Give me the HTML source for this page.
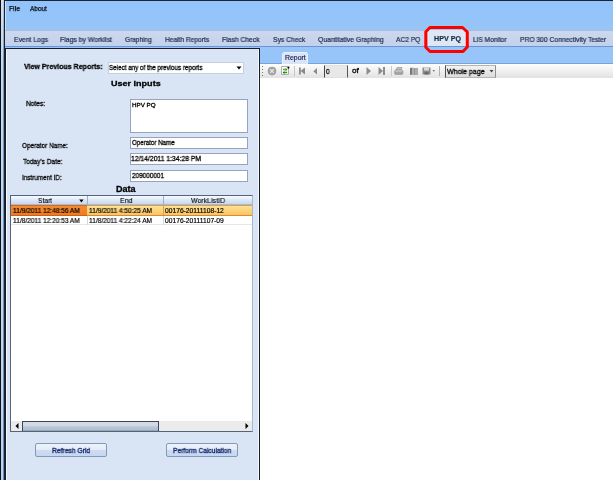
<!DOCTYPE html>
<html><head><meta charset="utf-8">
<style>
*{margin:0;padding:0;box-sizing:border-box}
html,body{width:613px;height:480px;overflow:hidden;background:#fff}
body{position:relative;font-family:"Liberation Sans",sans-serif;font-size:7px;color:#000}
.a{position:absolute}
.t{position:absolute;white-space:nowrap;line-height:1;transform-origin:0 0;-webkit-text-stroke:0.3px currentColor;will-change:transform}
</style></head><body>
<!-- window frame -->
<div class="a" style="left:0;top:0;width:1px;height:480px;background:#111"></div>
<div class="a" style="left:1px;top:0;width:2px;height:480px;background:linear-gradient(#d4e0ec 0,#c4d8f2 60px,#bcd4f4 100%)"></div>
<div class="a" style="left:3px;top:0;width:1px;height:480px;background:linear-gradient(#b8c8dc 0,#7898bc 60px,#6a8cb0 100%)"></div>
<div class="a" style="left:4px;top:0;width:609px;height:1px;background:#1c2434"></div>
<div class="a" style="left:4px;top:0;width:1px;height:480px;background:#1c2434"></div>
<!-- menu bar -->
<div class="a" style="left:5px;top:1px;width:608px;height:29px;background:linear-gradient(#92c4fb 0,#93c4fa 60%,#98c5f5 100%)"></div>
<div class="a" style="left:5px;top:1px;width:1px;height:29px;background:#c6e2fb"></div>
<!-- tab strip -->
<div class="a" style="left:5px;top:30px;width:608px;height:17px;background:linear-gradient(#cbd8ef,#c3d1ea);border-top:1px solid #a8bedc;border-bottom:1px solid #6a94d6"></div>
<div class="a" style="left:428px;top:30px;width:38px;height:16px;background:#dde8f4"></div>
<!-- blue under strip -->
<div class="a" style="left:5px;top:47px;width:608px;height:17px;background:#97c5fa;border-bottom:1px solid #7ca2da"></div>

<!-- left panel -->
<div class="a" style="left:5px;top:48px;width:255px;height:432px;background:#d9e5f5;border-top:1px solid #161c28;border-left:1px solid #161c28;border-right:1px solid #161c28"></div>
<div class="a" style="left:6px;top:49px;width:1px;height:431px;background:#f2faff"></div>
<div class="a" style="left:258px;top:49px;width:1px;height:431px;background:#f2f8ff"></div>
<!-- dropdown -->
<div class="a" style="left:108px;top:62px;width:136px;height:12px;background:#fff;border:1px solid #c4d0e2"></div>
<svg class="a" style="left:236px;top:66px" width="6" height="4"><path d="M0.5 0.5H5.5L3 3.5Z" fill="#000"/></svg>
<!-- text boxes -->
<div class="a" style="left:130px;top:99px;width:118px;height:34px;background:#fff;border:1px solid #94a4bc"></div>
<div class="a" style="left:130px;top:137px;width:118px;height:12px;background:#fff;border:1px solid #94a4bc"></div>
<div class="a" style="left:130px;top:153px;width:118px;height:12px;background:#fff;border:1px solid #94a4bc"></div>
<div class="a" style="left:130px;top:170px;width:118px;height:12px;background:#fff;border:1px solid #94a4bc"></div>
<!-- grid -->
<div class="a" style="left:10px;top:195px;width:243px;height:237px;background:#fff;border:1px solid #56647a;border-right-color:#a8b8cc"></div>
<div class="a" style="left:11px;top:196px;width:241px;height:9px;background:linear-gradient(#f8fbff,#dce8f8 50%,#c6d8f2);border-bottom:1px solid #a4bcdc"></div>
<div class="a" style="left:87px;top:196px;width:1px;height:9px;background:#9ab0cc"></div>
<div class="a" style="left:163px;top:196px;width:1px;height:9px;background:#9ab0cc"></div>
<svg class="a" style="left:79px;top:199px" width="5" height="4"><path d="M0.2 0.6H4.6L2.4 3.4Z" fill="#000"/></svg>
<!-- row1 -->
<div class="a" style="left:11px;top:205px;width:76px;height:11px;background:linear-gradient(#f48a30,#f07a22);border-top:1px solid #d86a18;border-bottom:1px solid #d0600e"></div>
<div class="a" style="left:87px;top:205px;width:165px;height:11px;background:linear-gradient(#fde096,#fac460);border-top:1px solid #e0a040;border-bottom:1px solid #d88a30"></div>
<div class="a" style="left:163px;top:205px;width:1px;height:10px;background:#e0a050"></div>
<!-- row2 -->
<div class="a" style="left:11px;top:224px;width:241px;height:1px;background:#e4e8ee"></div>
<div class="a" style="left:87px;top:216px;width:1px;height:9px;background:#d0d8e4"></div>
<div class="a" style="left:163px;top:216px;width:1px;height:9px;background:#d0d8e4"></div>
<!-- scrollbar -->
<div class="a" style="left:11px;top:421px;width:241px;height:10px;background:#ebebeb"></div>
<svg class="a" style="left:15px;top:423px" width="4" height="6"><path d="M3.5 0V6L0.5 3Z" fill="#000"/></svg>
<svg class="a" style="left:245px;top:423px" width="4" height="6"><path d="M0.5 0V6L3.5 3Z" fill="#000"/></svg>
<div class="a" style="left:22px;top:421px;width:137px;height:10px;background:linear-gradient(#d6dbe3 0%,#d2d8e2 40%,#b6c8d8 55%,#aec2d4 85%,#8898b0 100%);border:1px solid #3c4658;border-bottom:none"></div>
<!-- buttons -->
<div class="a" style="left:35px;top:443px;width:72px;height:14px;border:1px solid #8499b8;border-radius:2px;background:linear-gradient(#edf2fb 0%,#e6edf8 45%,#cbdbf2 55%,#c6d7f0 100%)"></div>
<div class="a" style="left:166px;top:443px;width:72px;height:14px;border:1px solid #8499b8;border-radius:2px;background:linear-gradient(#edf2fb 0%,#e6edf8 45%,#cbdbf2 55%,#c6d7f0 100%)"></div>

<!-- right area -->
<div class="a" style="left:282px;top:52px;width:26px;height:12px;background:#d8e4f7;border-radius:3px 3px 0 0;border:1px solid #eaf1fc;border-bottom:none"></div>
<div class="a" style="left:260px;top:64px;width:353px;height:14px;background:linear-gradient(#fdfdfd 0,#f8f8f8 20%,#e2e2e2 100%)"></div>
<!-- toolbar icons -->
<div class="a" style="left:262px;top:66px;width:1px;height:10px;background:repeating-linear-gradient(#777 0 1px,transparent 1px 3px)"></div>
<svg class="a" style="left:267px;top:66px" width="10" height="10"><circle cx="5" cy="5" r="4" fill="#a6a6a6" stroke="#8e8e8e" stroke-width="0.6"/><path d="M3.2 3.2L6.8 6.8M6.8 3.2L3.2 6.8" stroke="#e8e8e8" stroke-width="1.2"/></svg>
<svg class="a" style="left:281px;top:66px" width="9" height="10"><path d="M0.5 0.5H6.5L7.5 1.5V8.5H0.5Z" fill="#fff" stroke="#a2a4b0" stroke-width="0.9"/><path d="M2 3.6H5.2M3 6.6H6.2" stroke="#3a9a10" stroke-width="1.5"/><path d="M4.6 2L6.4 3.6L4.6 5.2Z M3.4 5L1.6 6.6L3.4 8.2Z" fill="#2c7a0c"/><path d="M2.2 3.3H5" stroke="#9ee040" stroke-width="0.5"/><circle cx="7.4" cy="1.6" r="1.1" fill="#000"/></svg>
<div class="a" style="left:294px;top:66px;width:1px;height:10px;background:#c8c8c8"></div>
<svg class="a" style="left:299px;top:67px" width="7" height="8"><rect x="0" y="0.5" width="1.8" height="7" fill="#8a8a8a"/><path d="M6 0.5V7.5L1.5 4Z" fill="#8a8a8a"/></svg>
<svg class="a" style="left:313px;top:67px" width="5" height="8"><path d="M4 1V7.5L0.3 4.25Z" fill="#8a8a8a"/></svg>
<div class="a" style="left:324px;top:65px;width:24px;height:13px;background:#e8e8e8;border:1px solid #e0e0e0;border-left-color:#444;border-right-color:#555"></div>
<svg class="a" style="left:366px;top:67px" width="6" height="8"><path d="M0.5 0V8L5 4Z" fill="#8c8c8c"/></svg>
<svg class="a" style="left:378px;top:67px" width="8" height="8"><path d="M0.5 0V8L5 4Z" fill="#8c8c8c"/><rect x="5" y="0" width="2" height="8" fill="#8c8c8c"/></svg>
<div class="a" style="left:391px;top:66px;width:1px;height:10px;background:#c8c8c8"></div>
<svg class="a" style="left:394px;top:67px" width="10" height="8"><path d="M3 0.5H8L7 3H2Z" fill="#c4c4c4" stroke="#8a8a8a" stroke-width="0.6"/><rect x="0.5" y="3" width="8.5" height="4.5" rx="1.5" fill="#a4a4a4" stroke="#888" stroke-width="0.5"/><rect x="1.5" y="3.4" width="6.5" height="1.2" fill="#d0d0d0"/></svg>
<svg class="a" style="left:409px;top:67px" width="10" height="8"><path d="M1 1L3.5 0.5V7.5L1 8Z" fill="#777"/><path d="M3.5 1H9V8H3.5Z" fill="#ababab"/><path d="M5.5 1V8" stroke="#888" stroke-width="0.6"/></svg>
<svg class="a" style="left:422px;top:67px" width="14" height="8"><path d="M0.5 0.5H8.5V7.5H0.5Z" fill="#8c8c8c"/><rect x="2" y="0.5" width="5" height="3" fill="#d8d8d8"/><rect x="2.5" y="5" width="4" height="2.5" fill="#6c6c6c"/><path d="M10.5 3.2H13L11.75 4.8Z" fill="#555"/></svg>
<div class="a" style="left:439px;top:66px;width:1px;height:10px;background:#b0b0b0"></div>
<div class="a" style="left:445px;top:65px;width:51px;height:13px;background:linear-gradient(#f2f2f2,#dcdcdc);border:1px solid #b4b4b4;border-left-color:#505050;border-right-color:#909090"></div>
<svg class="a" style="left:489px;top:70px" width="5" height="3"><path d="M0.5 0H4.5L2.5 2.5Z" fill="#444"/></svg>
<div class="t" style="left:8.85px;top:5.16px;font-size:7.97px;color:#000;-webkit-text-stroke:0.25px currentColor;transform:scaleX(0.862)">File</div>
<div class="t" style="left:30.37px;top:5.16px;font-size:7.97px;color:#000;-webkit-text-stroke:0.25px currentColor;transform:scaleX(0.811)">About</div>
<div class="t" style="left:14.35px;top:36.62px;font-size:6.96px;color:#1a2a4a;-webkit-text-stroke:0.2px currentColor;transform:scaleX(0.980)">Event Logs</div>
<div class="t" style="left:59.85px;top:36.62px;font-size:6.96px;color:#1a2a4a;-webkit-text-stroke:0.2px currentColor;transform:scaleX(0.986)">Flags by Worklist</div>
<div class="t" style="left:124.67px;top:36.62px;font-size:6.96px;color:#1a2a4a;-webkit-text-stroke:0.2px currentColor;transform:scaleX(0.934)">Graphing</div>
<div class="t" style="left:165.17px;top:36.62px;font-size:6.96px;color:#1a2a4a;-webkit-text-stroke:0.2px currentColor;transform:scaleX(0.950)">Health Reports</div>
<div class="t" style="left:222.46px;top:36.62px;font-size:6.96px;color:#1a2a4a;-webkit-text-stroke:0.2px currentColor;transform:scaleX(0.971)">Flash Check</div>
<div class="t" style="left:272.70px;top:36.62px;font-size:6.96px;color:#1a2a4a;-webkit-text-stroke:0.2px currentColor;transform:scaleX(0.971)">Sys Check</div>
<div class="t" style="left:317.70px;top:36.62px;font-size:6.96px;color:#1a2a4a;-webkit-text-stroke:0.2px currentColor;transform:scaleX(0.971)">Quantitative Graphing</div>
<div class="t" style="left:395.97px;top:36.62px;font-size:6.96px;color:#1a2a4a;-webkit-text-stroke:0.2px currentColor;transform:scaleX(0.954)">AC2 PQ</div>
<div class="t" style="left:434.34px;top:36.22px;font-size:6.96px;color:#1a2a4a;font-weight:bold;-webkit-text-stroke:0.2px currentColor;transform:scaleX(1.026)">HPV PQ</div>
<div class="t" style="left:473.47px;top:36.62px;font-size:6.96px;color:#1a2a4a;-webkit-text-stroke:0.2px currentColor;transform:scaleX(0.946)">LIS Monitor</div>
<div class="t" style="left:519.86px;top:36.62px;font-size:6.96px;color:#1a2a4a;-webkit-text-stroke:0.2px currentColor;transform:scaleX(0.967)">PRO 300 Connectivity Tester</div>
<div class="t" style="left:284.75px;top:55.04px;font-size:6.81px;color:#1e2a50;-webkit-text-stroke:0.2px currentColor;transform:scaleX(1.017)">Report</div>
<div class="t" style="left:326.25px;top:67.58px;font-size:7.25px;color:#000;transform:scaleX(0.872)">0</div>
<div class="t" style="left:351.67px;top:67.21px;font-size:7.68px;color:#000;transform:scaleX(1.064)">of</div>
<div class="t" style="left:446.96px;top:67.58px;font-size:7.25px;color:#000;transform:scaleX(0.973)">Whole page</div>
<div class="t" style="left:23.83px;top:62.59px;font-size:7.83px;color:#000;font-weight:bold;transform:scaleX(0.901)">View Previous Reports:</div>
<div class="t" style="left:109.42px;top:63.88px;font-size:7.25px;color:#000;transform:scaleX(0.865)">Select any of the previous reports</div>
<div class="t" style="left:110.56px;top:80.14px;font-size:8.12px;color:#000;font-weight:bold;transform:scaleX(1.113)">User Inputs</div>
<div class="t" style="left:25.97px;top:100.60px;font-size:7.10px;color:#000;transform:scaleX(0.932)">Notes:</div>
<div class="t" style="left:131.70px;top:101.86px;font-size:6.09px;color:#000;transform:scaleX(1.026)">HPV PQ</div>
<div class="t" style="left:22.01px;top:142.01px;font-size:7.68px;color:#000;transform:scaleX(0.835)">Operator Name:</div>
<div class="t" style="left:131.62px;top:140.20px;font-size:7.10px;color:#000;transform:scaleX(0.872)">Operator Name</div>
<div class="t" style="left:22.74px;top:157.66px;font-size:7.97px;color:#000;transform:scaleX(0.819)">Today's Date:</div>
<div class="t" style="left:131.39px;top:156.00px;font-size:7.10px;color:#000;transform:scaleX(0.957)">12/14/2011 1:34:28 PM</div>
<div class="t" style="left:22.33px;top:174.14px;font-size:8.12px;color:#000;transform:scaleX(0.780)">Instrument ID:</div>
<div class="t" style="left:131.58px;top:172.50px;font-size:7.10px;color:#000;transform:scaleX(0.904)">209000001</div>
<div class="t" style="left:116.11px;top:185.07px;font-size:8.55px;color:#000;font-weight:bold;transform:scaleX(1.059)">Data</div>
<div class="t" style="left:37.90px;top:197.14px;font-size:8.12px;color:#000;-webkit-text-stroke:0.12px currentColor;transform:scaleX(0.825)">Start</div>
<div class="t" style="left:120.24px;top:197.14px;font-size:8.12px;color:#000;-webkit-text-stroke:0.12px currentColor;transform:scaleX(0.867)">End</div>
<div class="t" style="left:191.47px;top:197.14px;font-size:8.12px;color:#000;-webkit-text-stroke:0.12px currentColor;transform:scaleX(0.861)">WorkListID</div>
<div class="t" style="left:12.61px;top:208.17px;font-size:6.67px;color:#000;-webkit-text-stroke:0.18px currentColor;transform:scaleX(0.985)">11/9/2011 12:48:56 AM</div>
<div class="t" style="left:88.81px;top:208.17px;font-size:6.67px;color:#000;-webkit-text-stroke:0.18px currentColor;transform:scaleX(0.983)">11/9/2011 4:50:25 AM</div>
<div class="t" style="left:164.93px;top:208.17px;font-size:6.67px;color:#000;-webkit-text-stroke:0.18px currentColor;transform:scaleX(1.006)">00176-20111108-12</div>
<div class="t" style="left:12.61px;top:218.17px;font-size:6.67px;color:#000;-webkit-text-stroke:0.18px currentColor;transform:scaleX(0.985)">11/8/2011 12:20:53 AM</div>
<div class="t" style="left:88.81px;top:218.17px;font-size:6.67px;color:#000;-webkit-text-stroke:0.18px currentColor;transform:scaleX(0.983)">11/8/2011 4:22:24 AM</div>
<div class="t" style="left:164.93px;top:218.17px;font-size:6.67px;color:#000;-webkit-text-stroke:0.18px currentColor;transform:scaleX(1.005)">00176-20111107-09</div>
<div class="t" style="left:52.26px;top:447.72px;font-size:6.96px;color:#13256a;transform:scaleX(0.968)">Refresh Grid</div>
<div class="t" style="left:173.17px;top:447.72px;font-size:6.96px;color:#13256a;transform:scaleX(0.954)">Perform Calculation</div>
<svg class="a" style="left:420px;top:22px" width="54" height="36"><path d="M5.8 9.8L10 5.5H42.5L47.3 10V25L43 29.5H10L5.8 25.2Z" fill="none" stroke="#ff0000" stroke-width="3" stroke-linejoin="round"/></svg>

</body></html>
